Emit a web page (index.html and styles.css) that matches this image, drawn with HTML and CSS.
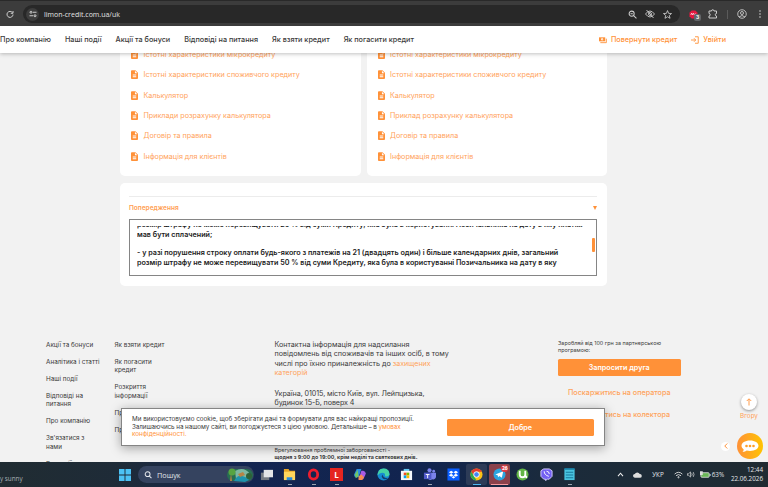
FILE: index.html
```html
<!DOCTYPE html>
<html lang="uk">
<head>
  <meta charset="UTF-8">
  <meta name="viewport" content="width=device-width, initial-scale=1.0">
  <title>Limon Credit</title>
  <link rel="stylesheet" href="styles.css">
</head>
<body>
  <svg class="sprite">
    <symbol id="doc" viewBox="0 0 16 20">
      <path fill="#ff9138" d="M2 0h8l6 6v12a2 2 0 0 1-2 2H2a2 2 0 0 1-2-2V2a2 2 0 0 1 2-2z"/>
      <path fill="#fff" d="M9 1.5V7h5.5zM4 10h8v2H4zM4 14h8v2H4z"/>
    </symbol>
  </svg>

  <div class="browser-bar">
    <svg class="reload" viewBox="0 0 16 16"><path d="M13 5.5A6 6 0 1 0 14 9M14 2v4.5H9.500" fill="none" stroke="#d0d0d0" stroke-width="2"/></svg>
    <div class="address">
      <span class="site-info">
        <svg viewBox="0 0 16 16" fill="none" stroke="#ddd" stroke-width="1.800"><circle cx="4" cy="4.500" r="2"/><path d="M8 4.500h7M1 11.500h7"/><circle cx="12" cy="11.500" r="2"/></svg>
      </span>
      <span class="url">limon-credit.com.ua/uk</span>
      <span class="address-icons">
        <svg viewBox="0 0 16 16" fill="none" stroke="#ccc" stroke-width="1.800"><circle cx="6.500" cy="6.500" r="4.500"/><path d="M10 10l5 5M4.500 6.500h4"/></svg>
        <svg class="eye" viewBox="0 0 20 16" fill="none" stroke="#ccc" stroke-width="1.800"><path d="M1 8q9-12 18 0q-9 12-18 0zM3 0l14 16"/><circle cx="10" cy="8" r="3"/></svg>
        <svg viewBox="0 0 16 16" fill="none" stroke="#ccc" stroke-width="1.500"><path d="M8 1l2 5 5.200.3-4 3.400 1.300 5.100L8 12l-4.500 2.800 1.300-5.100-4-3.400L6 6z"/></svg>
      </span>
    </div>
    <div class="extensions">
      <span class="adblock">
        <svg viewBox="0 0 20 20"><path d="M6 1h8l5 5v8l-5 5H6l-5-5V6z" fill="#e4173e"/><path d="M4 11l2-4 2 4 2-4 2 4 3-3" fill="none" stroke="#fff" stroke-width="1.500"/></svg>
        <b>3</b>
      </span>
      <svg class="puzzle" viewBox="0 0 20 20" fill="none" stroke="#ccc" stroke-width="2"><path d="M2 4h5a2.500 2.500 0 0 1 5 0h5v5a2.500 2.500 0 0 0 0 5v4H2v-4a2.500 2.500 0 0 0 0-5z"/></svg>
      <i class="separator"></i>
      <svg class="profile" viewBox="0 0 20 20" fill="none" stroke="#ccc" stroke-width="1.800"><circle cx="10" cy="10" r="8.500"/><circle cx="10" cy="8" r="3"/><path d="M4 16q6-6 12 0"/></svg>
      <svg class="dots" viewBox="0 0 4 16" fill="#ccc"><circle cx="2" cy="2" r="1.600"/><circle cx="2" cy="8" r="1.600"/><circle cx="2" cy="14" r="1.600"/></svg>
    </div>
  </div>

  <div class="page">
    <header class="site-header">
      <nav>
        <a>Про компанію</a>
        <a>Наші події</a>
        <a>Акції та бонуси</a>
        <a>Відповіді на питання</a>
        <a>Як взяти кредит</a>
        <a>Як погасити кредит</a>
      </nav>
      <div class="account">
        <a><svg viewBox="0 0 18 16"><path d="M0 2h14v9H0z" fill="#ff9138"/><circle cx="7" cy="6.500" r="2.500" fill="#fff"/><circle cx="7" cy="6.500" r="1" fill="#ff9138"/><path d="M16.500 5v9H3" fill="none" stroke="#ff9138" stroke-width="2"/></svg>Повернути кредит</a>
        <a><svg viewBox="0 0 16 16" fill="none" stroke="#ff9138" stroke-width="1.800"><path d="M8 1.500h6.500v13H8M0 8h9M6 4.500L9.500 8 6 11.500"/></svg>Увійти</a>
      </div>
    </header>

    <main>
      <div class="docs">
        <div class="card">
          <a><svg><use href="#doc"/></svg>Істотні характеристики мікрокредиту</a>
          <a><svg><use href="#doc"/></svg>Істотні характеристики споживчого кредиту</a>
          <a><svg><use href="#doc"/></svg>Калькулятор</a>
          <a><svg><use href="#doc"/></svg>Приклади розрахунку калькулятора</a>
          <a><svg><use href="#doc"/></svg>Договір та правила</a>
          <a><svg><use href="#doc"/></svg>Інформація для клієнтів</a>
        </div>
        <div class="card">
          <a><svg><use href="#doc"/></svg>Істотні характеристики мікрокредиту</a>
          <a><svg><use href="#doc"/></svg>Істотні характеристики споживчого кредиту</a>
          <a><svg><use href="#doc"/></svg>Калькулятор</a>
          <a><svg><use href="#doc"/></svg>Приклад розрахунку калькулятора</a>
          <a><svg><use href="#doc"/></svg>Договір та правила</a>
          <a><svg><use href="#doc"/></svg>Інформація для клієнтів</a>
        </div>
      </div>

      <section class="warning">
        <div class="warning-title"><span>Попередження</span><i class="caret"></i></div>
        <div class="warning-box">
          <div class="warning-text">
            <p>розмір штрафу не може перевищувати 25 % від суми Кредиту, яка була в користуванні Позичальника на дату в яку платіж<br>мав бути сплачений;</p>
            <p>- у разі порушення строку оплати будь-якого з платежів на 21 (двадцять один) і більше календарних днів, загальний<br>розмір штрафу не може перевищувати 50 % від суми Кредиту, яка була в користуванні Позичальника на дату в яку</p>
          </div>
          <i class="thumb"></i>
        </div>
      </section>
    </main>

    <footer>
      <div class="links">
        <a>Акції та бонуси</a>
        <a>Аналітика і статті</a>
        <a>Наші події</a>
        <a>Відповіді на<br>питання</a>
        <a>Про компанію</a>
        <a>Зв'язатися з<br>нами</a>
        <a>Вакансії</a>
      </div>
      <div class="links links-wide">
        <a>Як взяти кредит</a>
        <a>Як погасити<br>кредит</a>
        <a>Розкриття<br>інформації</a>
        <a>Про нас</a>
        <a>Правила</a>
      </div>
      <div class="contacts">
        <p>Контактна інформація для надсилання<br>повідомлень від споживачів та інших осіб, в тому<br>числі про їхню приналежність до <a>захищених<br>категорій</a></p>
        <p class="street">Україна, 01015, місто Київ, вул. Лейпцизька,<br>будинок 15-Б, поверх 4</p>
        <p class="debts">Врегулювання проблемної заборгованості -<br><b>щодня з 9:00 до 19:00, крім неділі та святкових днів.</b></p>
      </div>
      <div class="partner">
        <p>Заробляй від 100 грн за партнерською<br>програмою:</p>
        <button>Запросити друга</button>
        <a>Поскаржитись на оператора</a>
        <a>Поскаржитись на колектора</a>
      </div>
    </footer>

    <div class="cookie">
      <p>Ми використовуємо cookie, щоб зберігати дані та формувати для вас найкращі пропозиції.<br><span class="consent">Залишаючись на нашому сайті, ви погоджуєтеся з цією умовою. Детальніше – в <a>умовах</a></span><br><a>конфіденційності.</a></p>
      <button>Добре</button>
    </div>

    <div class="to-top">
      <span><svg viewBox="0 0 12 16" fill="none" stroke="#ff9138" stroke-width="1.800"><path d="M6 15V2M1.500 6L6 1.500 10.500 6"/></svg></span>
      Вгору
    </div>
    <div class="chat">
      <span class="chat-toggle"><svg viewBox="0 0 8 12" fill="none" stroke="#ff9138" stroke-width="2"><path d="M6.500 1l-5 5 5 5"/></svg></span>
      <svg class="chat-button" viewBox="0 0 26 26">
        <defs><linearGradient id="chatFill"><stop offset="0" stop-color="#ff9138"/><stop offset="1" stop-color="#ffc400"/></linearGradient></defs>
        <circle cx="13" cy="13" r="13" fill="url(#chatFill)"/>
        <path fill="#fff" d="M13 7.500c5 0 8.500 2.300 8.500 5.300S18 18 13 18c-1.200 0-2.300-.1-3.300-.4-1 .9-2.700 1.300-4.200 1.200.8-.8 1.200-1.500 1.200-2.400-1.400-1-2.200-2.200-2.200-3.600 0-3 3.500-5.300 8.500-5.300z"/>
        <g fill="#ff9f28"><circle cx="9.500" cy="13" r="1.300"/><circle cx="13" cy="13" r="1.300"/><circle cx="16.500" cy="13" r="1.300"/></g>
      </svg>
    </div>
  </div>

  <div class="taskbar">
    <span class="weather">y sunny</span>
    <svg class="windows" viewBox="0 0 13 13" fill="#4cc2f5"><path d="M0 0h6v6H0zM7 0h6v6H7zM0 7h6v6H0zM7 7h6v6H7z"/></svg>
    <div class="search">
      <svg viewBox="0 0 10 10" fill="none" stroke="#e6e9ee" stroke-width="1.300"><circle cx="4.500" cy="4" r="3"/><path d="M6.700 6.300L9.300 9"/></svg>
      <span>Пошук</span>
      <svg class="scene" viewBox="0 0 26 14"><rect y="1" width="26" height="12" rx="6" fill="#286e52"/><path d="M8 3q9-5 15 3l-5 5H9z" fill="#7eb7a0"/><path d="M7 13q3-6 8-5t7 4l-4 2z" fill="#1d93ac"/><path d="M11 6l5-2 2 3-5 2zM4 5l1 8H3z" fill="#b78345"/><circle cx="5" cy="4" r="3.500" fill="#57a441"/><circle cx="22" cy="8" r="3" fill="#2e6137"/></svg>
    </div>
    <div class="apps">
      <span><svg viewBox="0 0 14 14"><path fill="#777c83" d="M1 5h9v8H1z"/><path fill="#e4e5e7" d="M4 2h10v8H4z"/></svg></span>
      <span class="running"><svg viewBox="0 0 14 14"><path fill="#e6a526" d="M1 1h5l1 2h6v9H1z"/><path fill="#ffd65c" d="M1 4h12v9H1z"/><path fill="#258bdc" d="M4 10h6v3H4z"/></svg></span>
      <span class="running"><svg viewBox="0 0 14 14"><ellipse cx="7" cy="7" rx="4.500" ry="5" fill="none" stroke="#ed1d2e" stroke-width="3"/></svg></span>
      <span class="running"><i class="letter">L</i></span>
      <span><svg viewBox="0 0 14 14"><path fill="#2b8de3" d="M4 1h5L6 10H3Q0 9 2 5z"/><path fill="#70c765" d="M2 7l3-5 1 7-3 2z"/><path fill="#a65be5" d="M9 3h2q4 1 2 5l-2 4H6z"/><path fill="#f68b52" d="M6 9l3-2 3 3-2 3H6z"/></svg></span>
      <span><svg viewBox="0 0 14 14"><circle cx="7" cy="7" r="6.500" fill="#168bd2"/><path fill="#45d2a5" d="M4 1q9-2 9.500 6-1 3-5 2 1-4-3-4-3 0-5 3Q1 3 4 1z"/><path fill="#173969" d="M6 7q0 4 6 4-4 2-6 0-2-2 0-4z"/></svg></span>
      <span><svg viewBox="0 0 14 14"><path fill="#5fc5ef" d="M4 1h6v3H4z"/><path fill="#f5f7fb" d="M1 3h12v10H1z"/><path fill="#f25022" d="M4 5h3v3H4z"/><path fill="#7fba00" d="M7 5h3v3H7z"/><path fill="#00a4ef" d="M4 8h3v3H4z"/><path fill="#ffb900" d="M7 8h3v3H7z"/></svg></span>
      <span class="running"><svg viewBox="0 0 14 14" fill="#7b83eb"><circle cx="7" cy="2.500" r="2.200"/><circle cx="11.500" cy="3.500" r="1.500"/><path d="M5 5h9v5q-1 3-4 2-3 2-5-1z"/><path fill="#5059c9" d="M1 5h8v7H1z"/><path stroke="#fff" d="M3 7h4M5 7v4"/></svg></span>
      <span><svg viewBox="0 0 14 14"><path fill="#0a5eff" d="M.500.500h13v13H.5z"/><path fill="#fff" d="M4.500 3L7 4.600 4.500 6.200 2 4.600zM9.500 3L12 4.600 9.500 6.200 7 4.600zM4.500 6.200L7 7.800 4.500 9.400 2 7.800zM9.500 6.200L12 7.800 9.500 9.400 7 7.800zM7 8.500l2 1.500-2 1.300L5 10z"/></svg></span>
      <span class="running active"><svg viewBox="0 0 14 14"><circle cx="7" cy="7" r="6.500" fill="#fbc117"/><path fill="#e33b2e" d="M1.300 4A6.500 6.500 0 0 1 12.800 4H7L4 8z"/><path fill="#2da94f" d="M1.300 4l3 5L7 13.500A6.500 6.500 0 0 1 1.300 4z"/><circle cx="7" cy="7" r="3" fill="#4285f4" stroke="#fff"/></svg></span>
      <span class="running alert"><svg viewBox="0 0 14 14"><circle cx="7" cy="7" r="6.500" fill="#2ba5df"/><path fill="#fff" d="M2.500 7L11 3.500 9.500 10.500 6.800 8.700 5.500 10 5 7.800z"/></svg><b>26</b></span>
      <span><svg viewBox="0 0 14 14"><circle cx="7" cy="7" r="6.500" fill="#62b546"/><path d="M4 3v4q0 3 3 3t3-3V3M10 7q0 3 2 3" fill="none" stroke="#fff" stroke-width="2"/></svg></span>
      <span><svg viewBox="0 0 14 14"><path fill="#7360f2" stroke="#d9d2ff" d="M4 1h6l3 2v6l-3 3H8l-2 1.500V12H4L1 9V3z"/><path d="M4.500 3.500q0 4 5 5.500M7 3.500q3 0 3 3" fill="none" stroke="#fff"/></svg></span>
      <span class="running"><svg viewBox="0 0 14 14"><path fill="#49c4df" d="M1.500 1h11v12h-11z"/><path fill="#18799d" d="M1.500 0h11v2h-11zM3 4h8v1H3zM3 7h8v1H3zM3 10h8v1H3z"/></svg></span>
    </div>
    <div class="tray">
      <svg class="up" viewBox="0 0 8 6" fill="none" stroke="#eee" stroke-width="1.300"><path d="M1 5l3-3.500L7 5"/></svg>
      <svg class="cloud" viewBox="0 0 10 7"><path fill="#ddd" d="M2 7a2 2 0 0 1 0-4 3 3 0 0 1 5.500 0A2 2 0 0 1 8 7z"/></svg>
      <span class="lang">УКР</span>
      <svg class="wifi" viewBox="0 0 10 8" fill="none" stroke="#ddd"><path d="M.7 3q4.300-4 8.600 0M2.200 4.800q2.800-2.600 5.600 0"/><circle cx="5" cy="6.500" r=".7"/></svg>
      <svg class="sound" viewBox="0 0 10 8" fill="none" stroke="#ddd" stroke-width=".9"><path d="M.500 3h1.500L4.500.8v6.400L2 5H.5zM6 2.500q1 1.500 0 3M7.800 1q2 3 0 6"/></svg>
      <svg class="battery" viewBox="0 0 12 8"><rect x="1" y="1.500" width="9" height="5" rx="1" fill="#69b657" stroke="#ddd" stroke-width=".9"/><path fill="#ddd" d="M10.500 3h1v2h-1zM0 0h3v4H0z"/></svg>
      <span class="percent">63%</span>
      <div class="clock">12:44<br>22.06.2026</div>
    </div>
  </div>
</body>
</html>
```

FILE: styles.css
```css
* {
  box-sizing: border-box;
}

body {
  margin: 0;
  height: 487px;
  display: flex;
  flex-direction: column;
  overflow: hidden;
  font-family: Inter, "Noto Sans", sans-serif;
  color: #3a3a3a;
}

p {
  margin: 0;
}

a {
  white-space: nowrap;
}

svg {
  display: block;
  flex: none;
}

.sprite {
  position: absolute;
  width: 0;
  height: 0;
}

/* browser toolbar */
.browser-bar {
  height: 26px;
  flex: none;
  display: flex;
  align-items: center;
  padding: 1px 5px 0 6px;
  background: #3c3c3c;
  border-top: 1px solid #292929;
}

.reload {
  width: 8px;
  height: 8px;
  margin-right: 9px;
}

.address {
  width: 657px;
  height: 18px;
  border-radius: 9px;
  background: #282828;
  display: flex;
  align-items: center;
  padding: 0 8px 0 3px;
}

.site-info {
  width: 13px;
  height: 13px;
  border-radius: 50%;
  background: #3d3d3d;
  display: flex;
  align-items: center;
  justify-content: center;
}

.site-info svg {
  width: 8px;
  height: 8px;
}

.url {
  margin-left: 5px;
  font: 7px "Open Sans", sans-serif;
  color: #e3e3e3;
}

.address-icons {
  margin-left: auto;
  display: flex;
  align-items: center;
  gap: 8px;
}

.address-icons svg {
  width: 9px;
  height: 9px;
}

.address-icons .eye {
  width: 10px;
  height: 8px;
}

.extensions {
  flex: 1;
  display: flex;
  align-items: center;
  padding-left: 9px;
}

.adblock {
  position: relative;
  width: 10px;
}

.adblock svg {
  width: 9px;
  height: 9px;
}

.adblock b {
  position: absolute;
  left: 5px;
  top: 4px;
  width: 7px;
  height: 7px;
  border-radius: 2px;
  background: #626568;
  color: #fff;
  font-size: 5px;
  line-height: 7px;
  text-align: center;
}

.puzzle {
  width: 10px;
  height: 10px;
  margin-left: 9px;
}

.separator {
  width: 1px;
  height: 9px;
  margin-left: 9px;
  background: #5b5b5b;
}

.profile {
  width: 10px;
  height: 10px;
  margin-left: 9px;
}

.dots {
  width: 2px;
  height: 8px;
  margin-left: auto;
  margin-right: 2px;
}

/* site */
.page {
  position: relative;
  height: 436px;
  flex: none;
  overflow: hidden;
  background: #f2f2f2;
}

.site-header {
  position: relative;
  z-index: 1;
  height: 27px;
  display: flex;
  justify-content: space-between;
  align-items: center;
  padding-right: 42px;
  background: #fff;
  box-shadow: 0 1px 4px rgba(0, 0, 0, 0.25);
  font-size: 7.260px;
  font-weight: 500;
}

.site-header nav,
.account {
  display: flex;
  gap: 14px;
}

.account {
  color: #ff9138;
}

.account a {
  display: flex;
  align-items: center;
}

.account svg {
  width: 8px;
  height: 8px;
  margin-right: 4px;
}

main {
  width: 487px;
  margin-left: 120px;
}

.docs {
  display: flex;
  gap: 6px;
  margin-top: -10px;
}

.card {
  flex: 1;
  height: 133px;
  display: flex;
  flex-direction: column;
  padding: 1.500px 11px 0;
  border-radius: 5px;
  background: #fff;
}

.card a {
  height: 20.300px;
  display: flex;
  align-items: center;
  color: #ffa25a;
  font-size: 7.180px;
}

.card svg {
  width: 7px;
  height: 9px;
  margin-right: 5.500px;
}

.warning {
  height: 103px;
  margin-top: 7px;
  padding: 13px 10px 0 9px;
  border-radius: 5px;
  background: #fff;
}

.warning-title {
  height: 23px;
  display: flex;
  justify-content: space-between;
  align-items: center;
  border-top: 1px solid #ececec;
  color: #ff9f55;
  font-size: 6.500px;
  font-weight: 600;
}

.caret {
  border: 2px solid transparent;
  border-top: 4px solid #ff9138;
  border-bottom: 0;
}

.warning-box {
  height: 57px;
  display: flex;
  align-items: center;
  justify-content: space-between;
  padding: 5px 1px 7px 7px;
  border: 1px solid #858585;
}

.warning-text {
  height: 42px;
  display: flex;
  flex-direction: column;
  justify-content: flex-end;
  gap: 8px;
  overflow: hidden;
  white-space: nowrap;
  color: #222;
  font-size: 7.200px;
  font-weight: 600;
  line-height: 10px;
}

.thumb {
  width: 3px;
  height: 14px;
  border-radius: 1px;
  background: #ff9138;
  margin-bottom: 3px;
}

footer {
  display: flex;
  height: 130px;
  margin-top: 54px;
  padding-left: 46px;
}

.links {
  width: 68.500px;
  flex: none;
  display: flex;
  flex-direction: column;
  gap: 8.500px;
  font-size: 6.350px;
  line-height: 8.500px;
  padding-top: 0.500px;
}

.links-wide {
  width: 160px;
}

.contacts {
  width: 283.500px;
  flex: none;
  font-size: 7.150px;
  line-height: 9.300px;
  white-space: nowrap;
}

.contacts a {
  color: #ffa25a;
}

.street {
  margin-top: 12px;
  letter-spacing: -0.080px;
}

.debts {
  margin-top: 39px;
  font-size: 5.350px;
  line-height: 6.800px;
}

.partner {
  width: 122.500px;
  flex: none;
  display: flex;
  flex-direction: column;
  align-items: center;
}

.partner p {
  align-self: flex-start;
  font-size: 5.420px;
  line-height: 7px;
  white-space: nowrap;
}

button {
  border: 0;
  border-radius: 1.500px;
  background: #ff9138;
  color: #fff;
  font-family: inherit;
  font-size: 7.200px;
  font-weight: 600;
  padding: 0;
}

.partner button {
  width: 100%;
  height: 17px;
  flex: none;
  margin: 5px 0 11px;
}

.partner a {
  height: 22px;
  font-size: 7.200px;
  font-weight: 500;
  line-height: 12px;
  color: #ffa25a;
}

.cookie {
  position: absolute;
  left: 121px;
  top: 382px;
  width: 484px;
  height: 38px;
  display: flex;
  justify-content: space-between;
  align-items: center;
  padding: 0 10px;
  border: 1px solid #858585;
  background: #fff;
  box-shadow: 0 2px 10px rgba(0, 0, 0, 0.35);
  font-size: 6.300px;
  line-height: 7.600px;
  white-space: nowrap;
}

.cookie p {
  padding-top: 1px;
}

.cookie a {
  color: #ff9138;
}

.consent {
  letter-spacing: -0.070px;
}

.cookie button {
  width: 147.500px;
  height: 17px;
}

.to-top {
  position: absolute;
  left: 738px;
  top: 368px;
  width: 22px;
  display: flex;
  flex-direction: column;
  align-items: center;
  gap: 2px;
  color: #ff9f55;
  font-size: 6.300px;
}

.to-top span {
  width: 16px;
  height: 16px;
  display: flex;
  align-items: center;
  justify-content: center;
  border-radius: 50%;
  background: #fff;
  box-shadow: 0 1px 3px rgba(0, 0, 0, 0.4);
}

.to-top svg {
  width: 6px;
  height: 8px;
}

.chat {
  position: absolute;
  right: 5px;
  top: 407px;
  display: flex;
  align-items: center;
  gap: 7px;
}

.chat-toggle {
  width: 9px;
  height: 9px;
  display: flex;
  align-items: center;
  justify-content: center;
  border-radius: 50%;
  background: #fff;
}

.chat-toggle svg {
  width: 4px;
  height: 6px;
}

.chat-button {
  width: 26px;
  height: 26px;
}

/* windows taskbar */
.taskbar {
  flex: 1;
  display: flex;
  align-items: center;
  background: linear-gradient(90deg, #202c32 0, #1e2b38 16%, #142550 30%, #11244f 55%, #1b2b3b 72%, #202b32 100%);
  color: #e2e5e9;
  font-family: "Open Sans", sans-serif;
  font-size: 6.300px;
}

.weather {
  width: 119px;
  padding-top: 8px;
  color: #a9b0b5;
}

.windows {
  width: 12px;
  height: 12px;
}

.search {
  width: 116px;
  height: 17px;
  margin-left: 7px;
  display: flex;
  align-items: center;
  padding: 0 1px 0 6px;
  border-radius: 9px;
  background: #35435f;
  font-size: 7.300px;
}

.search svg {
  width: 8px;
  height: 8px;
  margin-right: 5px;
}

.search .scene {
  width: 26px;
  height: 14px;
  margin: 0 0 0 auto;
}

.apps {
  display: flex;
  margin-left: 2px;
}

.apps span {
  position: relative;
  width: 21.300px;
  height: 21px;
  margin-right: 2px;
  display: flex;
  align-items: center;
  justify-content: center;
  border-radius: 2px;
}

.apps svg {
  width: 13px;
  height: 13px;
}

.letter {
  width: 13px;
  height: 13px;
  background: #e52520;
  color: #fff;
  font: bold 8px/13px "Open Sans", sans-serif;
  text-align: center;
}

.running::after {
  content: "";
  position: absolute;
  bottom: 0;
  left: 9px;
  width: 4px;
  height: 1px;
  background: #9ba4b0;
}

.apps .active {
  background: #2d3b57;
}

.active::after {
  left: 7px;
  width: 8px;
  background: #50b9f2;
}

.apps .alert {
  background: #8b414b;
}

.alert::after {
  left: 2px;
  width: 17px;
  background: #f49a9e;
}

.alert b {
  position: absolute;
  top: 1px;
  right: 2px;
  width: 7px;
  height: 7px;
  border-radius: 50%;
  background: #e23d43;
  color: #fff;
  font-size: 5px;
  line-height: 7px;
  text-align: center;
}

.tray {
  flex: 1;
  display: flex;
  align-items: center;
  padding-left: 35px;
}

.up {
  width: 7px;
  height: 5px;
}

.cloud {
  width: 9px;
  height: 7px;
  margin-left: 9px;
}

.lang {
  margin-left: 10px;
}

.wifi {
  width: 9px;
  height: 8px;
  margin-left: 10px;
}

.sound {
  width: 8px;
  height: 7px;
  margin-left: 4px;
}

.battery {
  width: 11px;
  height: 8px;
  margin-left: 5px;
}

.percent {
  margin-left: 1px;
}

.clock {
  margin-left: auto;
  margin-right: 5px;
  text-align: right;
  line-height: 8.500px;
}
```
